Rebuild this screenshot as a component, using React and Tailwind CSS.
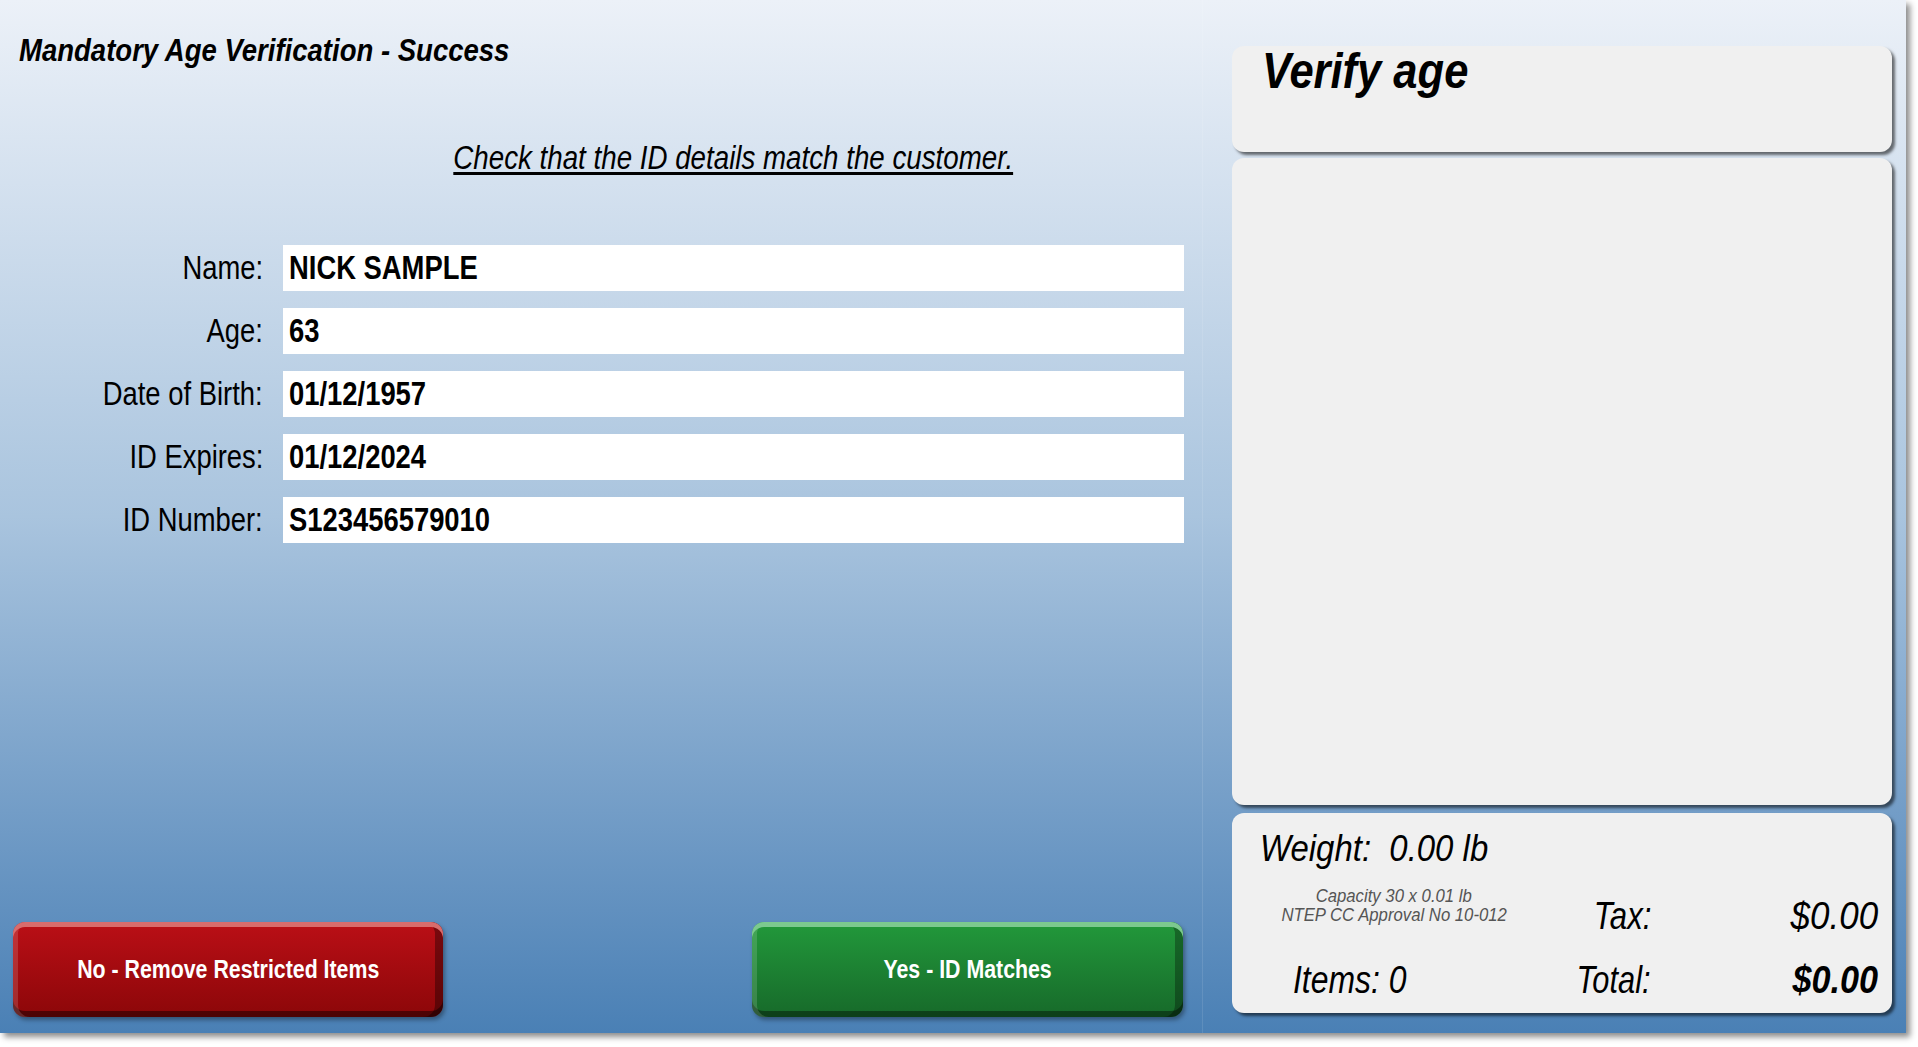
import React from "react";

const rows = [
  { label: "Name:", value: "NICK SAMPLE" },
  { label: "Age:", value: "63" },
  { label: "Date of Birth:", value: "01/12/1957" },
  { label: "ID Expires:", value: "01/12/2024" },
  { label: "ID Number:", value: "S123456579010" },
];

// the kiosk uses a condensed face; squeeze Liberation Sans to match
const Narrow = ({ className = "", children }) => (
  <span className={`inline-block whitespace-nowrap ${className}`}>{children}</span>
);

const Field = ({ label, value }) => (
  <div className="flex items-center">
    <div className="w-[263px] text-right text-[33px] leading-[36px] text-black">
      <Narrow className="origin-right scale-x-[0.83]">{label}</Narrow>
    </div>
    <div className="ml-[20px] flex h-[46px] w-[901px] items-center bg-white pl-[6px] text-[33px] font-bold leading-[36px] text-black">
      <Narrow className="origin-left scale-x-[0.83]">{value}</Narrow>
    </div>
  </div>
);

const card = "rounded-[12px] bg-[#f0f0f0] shadow-[3px_3px_3px_rgba(0,0,0,0.55)]";

const App = () => {
  return (
    <div className="h-[1047px] w-[1918px] overflow-hidden bg-white font-['Liberation_Sans',Arial,sans-serif]">
      <div className="flex h-[1033px] w-[1906px] bg-gradient-to-b from-[#ecf1f8] via-[#a9c4de] to-[#4a80b5] shadow-[4px_4px_6px_rgba(0,0,0,0.45)]">
        {/* left: verification form */}
        <div className="flex w-[1203px] flex-col border-r border-white/10">
          <h1 className="pl-[19px] pt-[33px] text-[32px] font-bold italic leading-[34px] text-black">
            <Narrow className="origin-left scale-x-[0.86]">Mandatory Age Verification - Success</Narrow>
          </h1>
          <div className="ml-[283px] mt-[74px] w-[901px] text-center text-[33px] italic leading-[34px] text-black">
            <Narrow className="origin-center scale-x-[0.84] underline underline-offset-[3px]">
              Check that the ID details match the customer.
            </Narrow>
          </div>
          <div className="mt-[70px] flex flex-col gap-[17px]">
            {rows.map((r) => (
              <Field key={r.label} label={r.label} value={r.value} />
            ))}
          </div>
          <div className="mt-auto flex justify-between pb-[16px] pl-[13px] pr-[19px]">
            <button className="flex h-[95px] w-[430px] items-center justify-center rounded-[12px] bg-gradient-to-b from-[#bb0f16] to-[#8c0709] text-[26px] font-bold text-white shadow-[inset_0_5px_0_#d86c6c,inset_5px_0_0_rgba(255,255,255,0.15),inset_-8px_0_0_rgba(0,0,0,0.35),inset_0_-6px_0_rgba(0,0,0,0.45),2px_3px_4px_rgba(0,0,0,0.35)]">
              <Narrow className="origin-center scale-x-[0.82]">No - Remove Restricted Items</Narrow>
            </button>
            <button className="flex h-[95px] w-[431px] items-center justify-center rounded-[12px] bg-gradient-to-b from-[#22993b] to-[#176a2a] text-[26px] font-bold text-white shadow-[inset_0_5px_0_#7cc98f,inset_5px_0_0_rgba(255,255,255,0.15),inset_-8px_0_0_rgba(0,0,0,0.3),inset_0_-6px_0_rgba(0,0,0,0.4),2px_3px_4px_rgba(0,0,0,0.35)]">
              <Narrow className="origin-center scale-x-[0.82]">Yes - ID Matches</Narrow>
            </button>
          </div>
        </div>

        {/* right: summary cards */}
        <div className="flex flex-1 flex-col gap-[6px] pb-[20px] pl-[29px] pr-[14px] pt-[46px]">
          <div className={`h-[106px] pl-[30px] ${card}`}>
            <div className="text-[50px] font-bold italic leading-[50px] text-black">
              <Narrow className="origin-left scale-x-[0.87]">Verify age</Narrow>
            </div>
          </div>
          <div className={`h-[647px] ${card}`} />
          <div className={`mt-[2px] flex h-[200px] flex-col ${card}`}>
            <div className="pl-[28px] pt-[18px] text-[37px] italic leading-[36px] text-black">
              <Narrow className="origin-left scale-x-[0.89]">Weight:&nbsp;&nbsp;0.00 lb</Narrow>
            </div>
            <div className="mt-[18px] flex">
              <div className="w-[324px] pt-[1px] text-center text-[19px] italic leading-[19px] text-[#555]">
                <div>
                  <Narrow className="origin-center scale-x-[0.88]">Capacity 30 x 0.01 lb</Narrow>
                </div>
                <div>
                  <Narrow className="origin-center scale-x-[0.88]">NTEP CC Approval No 10-012</Narrow>
                </div>
              </div>
              <div className="w-[95px] pt-[12px] text-right text-[38px] italic leading-[38px] text-black">
                <Narrow className="origin-right scale-x-[0.82]">Tax:</Narrow>
              </div>
              <div className="flex-1 pr-[14px] pt-[12px] text-right text-[38px] italic leading-[38px] text-black">
                <Narrow className="origin-right scale-x-[0.92]">$0.00</Narrow>
              </div>
            </div>
            <div className="mt-[26px] flex">
              <div className="w-[324px] pl-[61px] text-[38px] italic leading-[38px] text-black">
                <Narrow className="origin-left scale-x-[0.84]">Items: 0</Narrow>
              </div>
              <div className="w-[95px] text-right text-[38px] italic leading-[38px] text-black">
                <Narrow className="origin-right scale-x-[0.81]">Total:</Narrow>
              </div>
              <div className="flex-1 pr-[14px] text-right text-[38px] font-bold italic leading-[38px] text-black">
                <Narrow className="origin-right scale-x-[0.9]">$0.00</Narrow>
              </div>
            </div>
          </div>
        </div>
      </div>
    </div>
  );
};

export default App;
